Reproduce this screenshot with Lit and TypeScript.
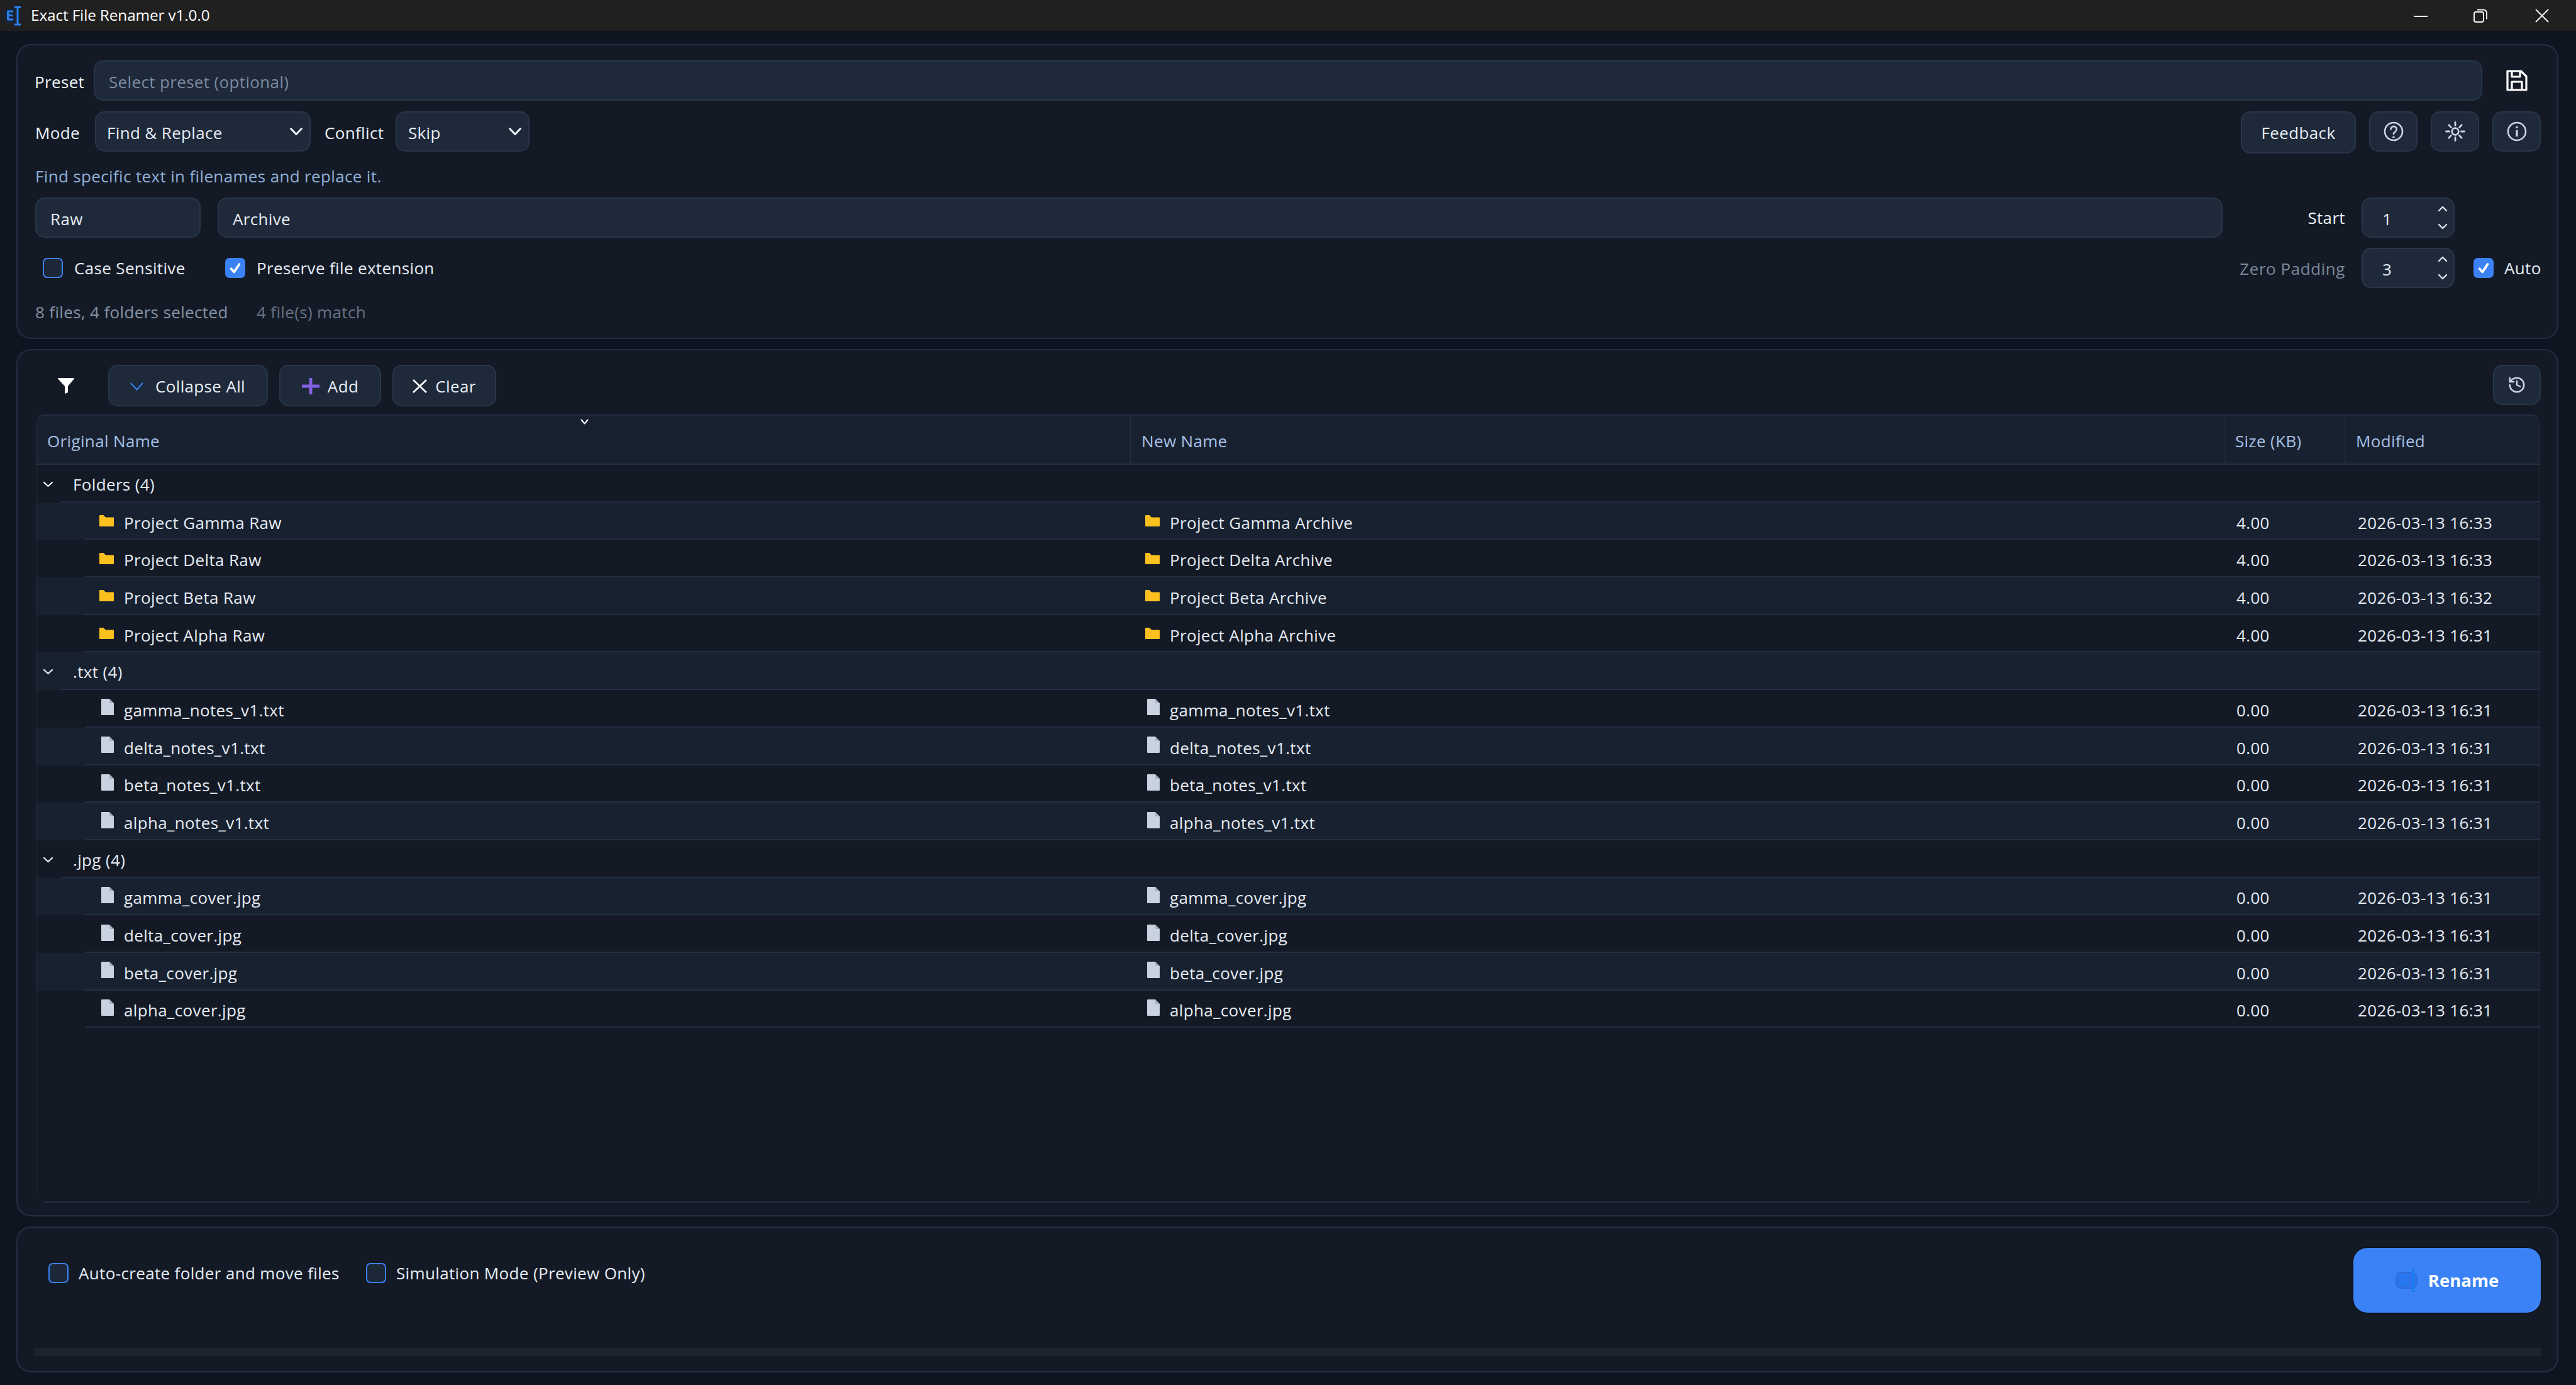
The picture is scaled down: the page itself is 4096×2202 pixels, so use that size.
import { LitElement, html, css } from "lit";
import { customElement } from "lit/decorators.js";

const chevron = (cls = "sel-chev") => html`<svg class=${cls} viewBox="0 0 22 14" fill="none" stroke="currentColor" stroke-width="3" stroke-linecap="round" stroke-linejoin="round"><path d="M2.5 2.5 11 11.5 19.5 2.5"/></svg>`;
const check = html`<svg class="tick" viewBox="0 0 24 24" fill="none" stroke="#fff" stroke-width="3.2" stroke-linecap="round" stroke-linejoin="round"><path d="M6.5 13 10.5 17.5 17.5 7"/></svg>`;
const folder = html`<svg class="folder" viewBox="0 0 23 18"><path fill="#fcc01f" d="M1 0h5.5L10 3.4h12a1 1 0 0 1 1 1V17a1 1 0 0 1-1 1H1a1 1 0 0 1-1-1V1a1 1 0 0 1 1-1z"/></svg>`;
const file = html`<svg class="file" viewBox="0 0 20 26"><path fill="#c9d3e0" d="M1 0h12l7 7v18a1 1 0 0 1-1 1H1a1 1 0 0 1-1-1V1a1 1 0 0 1 1-1z"/><path fill="#8b97a8" d="M13 0l7 7h-7z" opacity=".55"/></svg>`;
const chevronUp = html`<svg class="u" viewBox="0 0 16 10" fill="none" stroke="currentColor" stroke-width="2.4" stroke-linecap="round" stroke-linejoin="round"><path d="M2 8l6-6 6 6"/></svg>`;

interface Row { kind: "group" | "folder" | "file"; name?: string; orig?: string; next?: string; size?: string; date?: string; }

const rows: Row[] = [
  { kind: "group", name: "Folders (4)" },
  { kind: "folder", orig: "Project Gamma Raw", next: "Project Gamma Archive", size: "4.00", date: "2026-03-13 16:33" },
  { kind: "folder", orig: "Project Delta Raw", next: "Project Delta Archive", size: "4.00", date: "2026-03-13 16:33" },
  { kind: "folder", orig: "Project Beta Raw", next: "Project Beta Archive", size: "4.00", date: "2026-03-13 16:32" },
  { kind: "folder", orig: "Project Alpha Raw", next: "Project Alpha Archive", size: "4.00", date: "2026-03-13 16:31" },
  { kind: "group", name: ".txt (4)" },
  ...["gamma_notes_v1.txt", "delta_notes_v1.txt", "beta_notes_v1.txt", "alpha_notes_v1.txt"].map((n) => ({ kind: "file" as const, orig: n, next: n, size: "0.00", date: "2026-03-13 16:31" })),
  { kind: "group", name: ".jpg (4)" },
  ...["gamma_cover.jpg", "delta_cover.jpg", "beta_cover.jpg", "alpha_cover.jpg"].map((n) => ({ kind: "file" as const, orig: n, next: n, size: "0.00", date: "2026-03-13 16:31" })),
];

@customElement("app-root")
export class AppRoot extends LitElement {
  static styles = css`
    :host {
      display: flex; flex-direction: column; width: 4096px; height: 2202px; background: #0e1520;
      font-family: "Open Sans", "Noto Sans", "Liberation Sans", sans-serif; font-size: 26px; letter-spacing: .35px; color: #e6ecf4; overflow: hidden;
      --line: #222f42; --field: #1e293a; --fb: #293649; --lit: #182130; --card: #141a25;
    }
    * { box-sizing: border-box; }
    svg { display: block; flex: none; }

    .title { height: 49px; background: #202020; display: flex; align-items: center; flex: none; color: #fff; }
    .logo { width: 34px; height: 34px; margin-left: 3px; margin-right: 12px; }
    .app { font-size: 24.4px; letter-spacing: -.15px; padding-bottom: 2px; flex: 1; }
    .wc { width: 22px; height: 22px; color: #f0f0f0; }
    .wc.a { margin-right: 73px; }
    .wc.b { margin-right: 76px; }
    .wc.c { margin-right: 43px; }

    .main { flex: 1; display: flex; flex-direction: column; gap: 16px; padding: 21px 28px 20px 26px; min-height: 0; }
    .card { background: var(--card); border: 2px solid var(--line); border-radius: 23px; }

    .top { height: 469px; padding: 24px 26px 0 28px; display: flex; flex-direction: column; flex: none; }
    .r { display: flex; align-items: center; flex: none; }
    .r1 { height: 64px; }
    .r2 { height: 64px; margin-top: 17px; }
    .hint { height: 30px; margin-top: 24px; color: #8fb0d8; }
    .r4 { height: 64px; margin-top: 19px; }
    .r5 { height: 64px; margin-top: 16px; }
    .stat { height: 30px; margin-top: 23px; color: #8492a6; }
    .stat .m { color: #667285; }
    .stat .a { width: 352px; }
    .lab { color: #edf2f8; padding-top: 3px; }
    .lab.p { width: 93px; margin-left: -1px; flex: none; }
    .lab.m { width: 95px; }
    .lab.c { margin-left: 22px; width: 113px; }

    .field { height: 64px; background: var(--field); border: 2px solid var(--fb); border-radius: 15px; display: flex; align-items: center; padding: 4px 0 0 22px; color: #e6ecf4; }
    .preset { flex: 1; color: #7d8b9f; margin-left: 1px; }
    .save { width: 77px; margin-left: 16px; display: flex; justify-content: center; color: #fff; }
    .save svg { width: 36px; height: 36px; }
    .sel { position: relative; padding-left: 17px; }
    .sel.mode { width: 343px; }
    .sel.skip { width: 213px; padding-left: 18px; }
    .sel-chev { width: 22px; height: 14px; position: absolute; right: 10px; top: 23px; color: #f0f4f8; }
    .spacer { flex: 1; }
    .btn { background: var(--field); border: 2px solid var(--fb); border-radius: 15px; display: flex; align-items: center; justify-content: center; color: #e8eef6; flex: none; }
    .feedback { width: 183px; height: 67px; margin-top: 3px; margin-right: 21px; }
    .ib { width: 77px; height: 64px; color: #c9d4e4; margin-left: 21px; }
    .feedback + .ib { margin-left: 0; }
    .ib svg { width: 32px; height: 32px; }
    .raw { width: 263px; }
    .arch { flex: 1; margin-left: 27px; }
    .rl { width: 195px; text-align: right; margin-right: 26px; color: #edf2f8; }
    .rl.g { color: #7b889b; width: auto; margin-left: auto; padding-top: 2px; letter-spacing: .55px; }
    .spin { width: 148px; position: relative; padding-left: 31px; }
    .spin .u, .spin .d { width: 16px; height: 10px; position: absolute; right: 9px; color: #dbe3ec; }
    .spin .u { top: 11px; }
    .spin .d { top: 39px; }
    .gap-end { width: 137px; flex: none; }
    .chk { width: 32px; height: 32px; border-radius: 7px; border: 2px solid #3b82f6; background: #1c2738; flex: none; display: flex; align-items: center; justify-content: center; }
    .chk.on { background: #3b82f6; }
    .tick { width: 28px; height: 28px; }
    .cl { display: flex; align-items: center; gap: 18px; }
    .case { margin-left: 12px; width: 290px; }
    .pres { gap: 18px; }
    .auto { margin-left: 30px; gap: 17px; width: 107px; }

    .mid { flex: 1; min-height: 0; padding: 23px 27px 20px 29px; display: flex; flex-direction: column; }
    .tools { display: flex; align-items: flex-start; height: 66px; flex: none; }
    .funnel { width: 26px; height: 25px; margin: 21px 54px 0 35px; color: #fff; }
    .tb { height: 66px; gap: 13px; margin-right: 18px; padding-top: 2px; }
    .tb .ic-c { width: 21px; height: 13px; color: #3b82f6; }
    .col { width: 254px; justify-content: flex-start; padding-left: 33px; gap: 19px; }
    .add { width: 162px; }
    .clr { width: 165px; }
    .hist { width: 76px; height: 64px; margin-left: auto; margin-right: -1px; color: #c9d4e4; }
    .hist svg { width: 30px; height: 30px; }

    .table {
      flex: 1; margin-top: 13px; min-height: 0; position: relative;
      background:
        linear-gradient(var(--line), var(--line)) 16px 0 / calc(100% - 32px) 2px no-repeat,
        linear-gradient(var(--line), var(--line)) 12px 100% / calc(100% - 28px) 2px no-repeat,
        linear-gradient(var(--line), var(--line)) 0 14px / 1px calc(100% - 28px) no-repeat,
        linear-gradient(var(--line), var(--line)) 100% 14px / 1px calc(100% - 28px) no-repeat;
      padding: 0 1px;
    }
    .grid { display: grid; grid-template-columns: 1739px 1739px 192px 1fr; }
    .head { height: 80px; background: var(--lit); border-top: 2px solid var(--line); border-bottom: 2px solid var(--line); border-radius: 12px 12px 0 0; color: #a5c0e4; }
    .head > div { display: flex; align-items: center; padding: 4px 0 0 17px; border-left: 1px solid var(--line); position: relative; }
    .head > div:first-child { border-left: 0; }
    .sort { position: absolute; left: 865px; top: 5px; width: 13px; height: 9px; color: #fff; }
    .row { height: 59.7px; --x: 77px; background: linear-gradient(var(--line), var(--line)) var(--x) 100% / 100% 2px no-repeat; }
    .row.lit { background-color: var(--lit); }
    .row.group { --x: 39px; }
    .row > div { display: flex; align-items: center; padding-top: 4px; white-space: nowrap; }
    .row > .gcell { grid-column: 1 / -1; padding-top: 2px; }
    .g-chev { width: 17px; height: 10px; margin: 0 31px 0 10px; color: #eef2f7; }
    .c1 { padding-left: 100px; }
    .c2 { padding-left: 24px; }
    .c3 { padding-left: 20px; }
    .c4 { padding-left: 21px; }
    .folder { width: 23px; height: 18px; margin-right: 16px; margin-top: -5px; }
    .file { width: 20px; height: 26px; margin: -9px 16px 0 3px; }
    .c2 .file { margin-left: 3px; }

    .bot { height: 232px; flex: none; padding: 0 26px 0 27px; display: flex; flex-direction: column; }
    .bot-main { flex: 1; display: flex; align-items: flex-start; }
    .bot .chk { margin-top: 53px; }
    .bot .cl { gap: 16px; }
    .bot .t { margin-top: 54px; }
    .bot .c-a { margin-left: 22px; width: 505px; }
    .rename { margin-left: auto; margin-top: 32px; width: 298px; height: 103px; border-radius: 22px; background: #3b82f6; box-shadow: 0 0 3px #000; display: flex; align-items: center; justify-content: center; gap: 14px; color: #fff; font-weight: 700; font-size: 27.5px; letter-spacing: 0; }
    .rename svg { width: 38px; height: 38px; }
    .bar { height: 13px; background: #1d242e; margin-bottom: 24px; flex: none; }
  `;

  private logo(cls: string) {
    return html`<svg class=${cls} viewBox="0 0 34 34" fill="none"><rect x="2" y="5" width="29" height="24" rx="10" fill="#16263f" opacity=".7"/><path d="M9 10H18M9 16.5H17M9 23H18M9.5 9v15" stroke="#2a7ff0" stroke-width="3"/><path d="M20 3.5h10M20 31h10M25 3v28" stroke="#2a7ff0" stroke-width="3"/></svg>`;
  }

  private spin(v: string) {
    return html`<div class="field spin">${v}${chevronUp}<svg class="d" viewBox="0 0 16 10" fill="none" stroke="currentColor" stroke-width="2.4" stroke-linecap="round" stroke-linejoin="round"><path d="M2 2l6 6 6-6"/></svg></div>`;
  }

  private row(r: Row, i: number) {
    const lit = i % 2 === 1;
    if (r.kind === "group") {
      return html`<div class="grid row group ${lit ? "lit" : ""}"><div class="gcell">
        <svg class="g-chev" viewBox="0 0 17 10" fill="none" stroke="currentColor" stroke-width="2.2" stroke-linecap="round" stroke-linejoin="round"><path d="M2 2l6.5 6L15 2"/></svg>${r.name}</div></div>`;
    }
    const ic = r.kind === "folder" ? folder : file;
    return html`<div class="grid row ${lit ? "lit" : ""}">
      <div class="c1">${ic}${r.orig}</div>
      <div class="c2">${ic}${r.next}</div>
      <div class="c3">${r.size}</div>
      <div class="c4">${r.date}</div>
    </div>`;
  }

  render() {
    return html`
      <div class="title">
        ${this.logo("logo")}
        <div class="app">Exact File Renamer v1.0.0</div>
        <svg class="wc a" viewBox="0 0 22 22" fill="none" stroke="currentColor" stroke-width="2"><path d="M0 12H22"/></svg>
        <svg class="wc b" viewBox="0 0 22 22" fill="none" stroke="currentColor" stroke-width="2"><rect x="1" y="5" width="15" height="16" rx="3"/><path d="M6 1.5h10a5 5 0 0 1 5 5v10"/></svg>
        <svg class="wc c" viewBox="0 0 22 22" fill="none" stroke="currentColor" stroke-width="2"><path d="M1 1 21 21M21 1 1 21"/></svg>
      </div>
      <div class="main">
        <section class="card top">
          <div class="r r1">
            <div class="lab p">Preset</div>
            <div class="field preset">Select preset (optional)</div>
            <div class="save"><svg viewBox="0 0 36 36" fill="none" stroke="currentColor" stroke-width="3.2" stroke-linejoin="round"><path d="M3 3h21.5L33 11.5V33H3z"/><path d="M10 3v9h13V3M10 33V20h16v13"/></svg></div>
          </div>
          <div class="r r2">
            <div class="lab m">Mode</div>
            <div class="field sel mode">Find &amp; Replace${chevron()}</div>
            <div class="lab c">Conflict</div>
            <div class="field sel skip">Skip${chevron()}</div>
            <div class="spacer"></div>
            <div class="btn feedback">Feedback</div>
            <div class="btn ib"><svg viewBox="0 0 32 32" fill="none" stroke="currentColor" stroke-width="2.6" stroke-linecap="round"><circle cx="16" cy="16" r="14"/><path d="M11.5 12.5a4.6 4.6 0 1 1 7.2 3.8c-1.6 1.1-2.7 2-2.7 3.7"/><path d="M14.8 25h2.4" stroke-width="2"/></svg></div>
            <div class="btn ib"><svg viewBox="0 0 32 32" fill="none" stroke="currentColor" stroke-width="2.8" stroke-linecap="round"><circle cx="16" cy="16" r="5.3"/><path d="M16 1.5v5M16 25.5v5M1.5 16h5M25.5 16h5M5.8 5.8l3.6 3.6M22.6 22.6l3.6 3.6M5.8 26.2l3.6-3.6M22.6 9.4l3.6-3.6"/></svg></div>
            <div class="btn ib"><svg viewBox="0 0 32 32" fill="none" stroke="currentColor" stroke-width="2.6"><circle cx="16" cy="16" r="14"/><path d="M16 14v10" stroke-width="3.4"/><path d="M16 8v3" stroke-width="3.4"/></svg></div>
          </div>
          <div class="r hint">Find specific text in filenames and replace it.</div>
          <div class="r r4">
            <div class="field raw">Raw</div>
            <div class="field arch">Archive</div>
            <div class="rl">Start</div>
            ${this.spin("1")}
            <div class="gap-end"></div>
          </div>
          <div class="r r5">
            <div class="cl case"><div class="chk"></div>Case Sensitive</div>
            <div class="cl pres"><div class="chk on">${check}</div>Preserve file extension</div>
            <div class="rl g">Zero Padding</div>
            ${this.spin("3")}
            <div class="cl auto"><div class="chk on">${check}</div>Auto</div>
          </div>
          <div class="r stat"><div class="a">8 files, 4 folders selected</div><div class="m">4 file(s) match</div></div>
        </section>

        <section class="card mid">
          <div class="tools">
            <svg class="funnel" viewBox="0 0 26 25"><path fill="currentColor" d="M1 0h24a1 1 0 0 1 .8 1.6L16 13v10l-5 2V13L.2 1.6A1 1 0 0 1 1 0z"/></svg>
            <div class="btn tb col"><svg class="ic-c" viewBox="0 0 21 13" fill="none" stroke="currentColor" stroke-width="2" stroke-linecap="round" stroke-linejoin="round"><path d="M1.5 1.5 10.5 11.5 19.5 1.5"/></svg>Collapse All</div>
            <div class="btn tb add"><svg width="28" height="26" viewBox="0 0 28 26" fill="none" stroke="#8360e0" stroke-width="5"><path d="M14 0v26M0 13h28"/></svg>Add</div>
            <div class="btn tb clr"><svg width="23" height="22" viewBox="0 0 23 22" fill="none" stroke="#fff" stroke-width="2.6"><path d="M1 1l21 20M22 1 1 21"/></svg>Clear</div>
            <div class="btn hist"><svg viewBox="0 0 24 24" fill="none" stroke="currentColor" stroke-width="2" stroke-linecap="round" stroke-linejoin="round"><path d="M3 12a9 9 0 1 0 9-9 9.75 9.75 0 0 0-6.74 2.74L3 8"/><path d="M3 3v5h5"/><path d="M12 7v5l4 2"/></svg></div>
          </div>
          <div class="table">
            <div class="grid head">
              <div>Original Name<svg class="sort" viewBox="0 0 13 9" fill="none" stroke="currentColor" stroke-width="2" stroke-linecap="round" stroke-linejoin="round"><path d="M1.5 1.5 6.5 7.5 11.5 1.5"/></svg></div>
              <div>New Name</div><div>Size (KB)</div><div>Modified</div>
            </div>
            ${rows.map((r, i) => this.row(r, i))}
          </div>
        </section>

        <section class="card bot">
          <div class="bot-main">
            <div class="cl c-a"><div class="chk"></div><span class="t">Auto-create folder and move files</span></div>
            <div class="cl"><div class="chk"></div><span class="t">Simulation Mode (Preview Only)</span></div>
            <div class="rename">${this.renameIcon()}Rename</div>
          </div>
          <div class="bar"></div>
        </section>
      </div>`;
  }

  private renameIcon() {
    return html`<svg viewBox="0 0 38 38" fill="none"><rect x="1" y="6" width="33" height="25" rx="9" fill="#2f74e8" stroke="#2c6cd8" stroke-width="2"/><path d="M10 12h12M10 18.5h10M10 25h12M11 11v15" stroke="#1f7cf5" stroke-width="3"/><path d="M28 1v36" stroke="#1f7cf5" stroke-width="5"/></svg>`;
  }
}
